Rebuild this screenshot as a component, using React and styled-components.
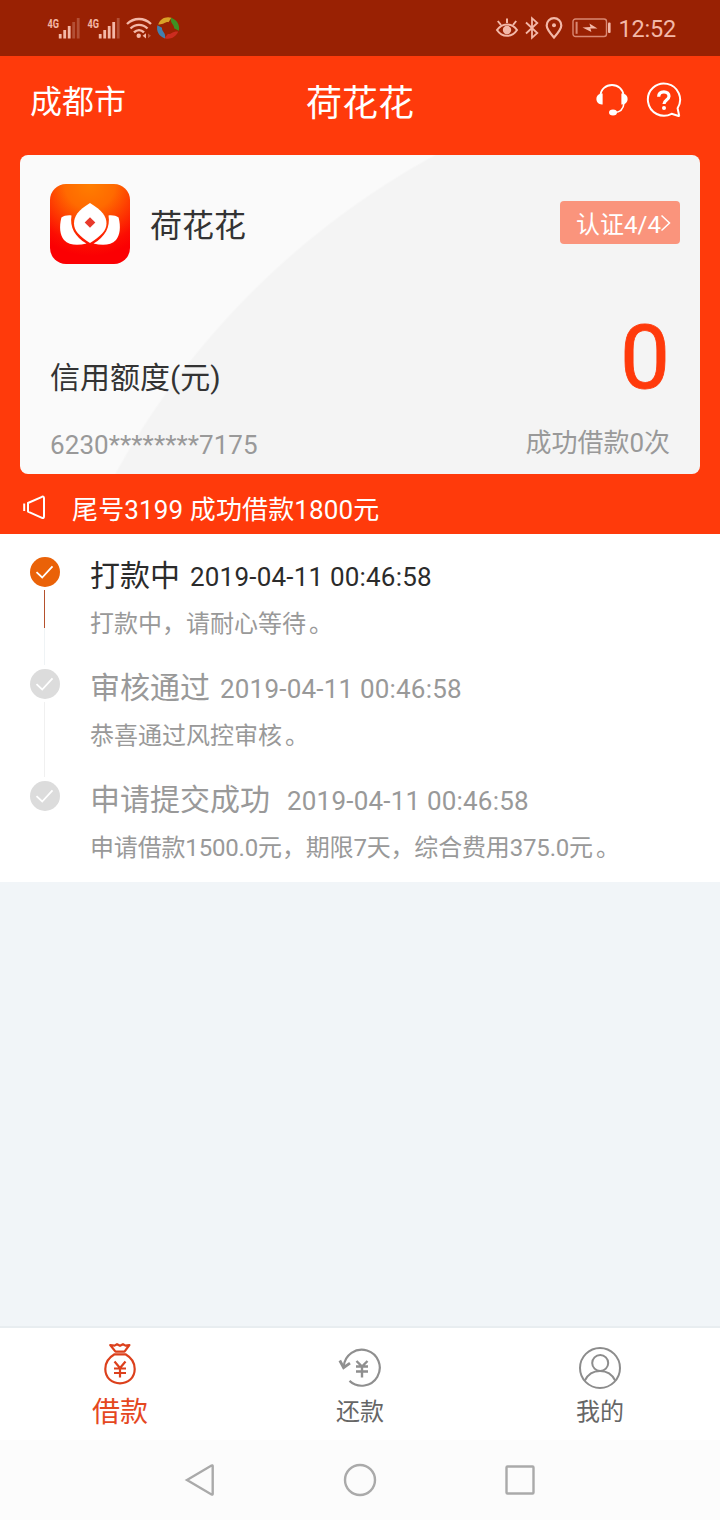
import React from 'react';
import styled, { createGlobalStyle } from 'styled-components';

const steps = [
  {
    title: '打款中',
    time: '2019-04-11 00:46:58',
    text: '打款中，请耐心等待',
    active: true,
    gap: 9,
  },
  {
    title: '审核通过',
    time: '2019-04-11 00:46:58',
    text: '恭喜通过风控审核',
    gap: 9,
  },
  {
    title: '申请提交成功',
    time: '2019-04-11 00:46:58',
    text: '申请借款1500.0元，期限7天，综合费用375.0元',
    gap: 16,
    spacing: -0.17,
  },
];

const SignalIcon = ({ bars }) => (
  <svg width="34" height="26" viewBox="0 0 34 26">
    <text x="0.5" y="12.5" fontSize="13" fontWeight="700" textLength="11.5" lengthAdjust="spacingAndGlyphs" fill="#f3b8a8" fontFamily="Roboto">
      4G
    </text>
    {[0, 1, 2, 3, 4].map((i) => (
      <rect
        key={i}
        x={11.8 + i * 4.5}
        y={[19, 15, 11, 7, 3][i]}
        width="2.8"
        height={[4.5, 8.5, 12.5, 16.5, 20.5][i]}
        fill="#f3b8a8"
        opacity={i < bars ? 1 : 0.3}
      />
    ))}
  </svg>
);

const WifiIcon = () => (
  <svg width="26" height="26" viewBox="0 0 26 26" fill="none" stroke="#f3b8a8" strokeWidth="2.4">
    <path d="M1 9 C8 2.4 18 2.4 25 9" />
    <path d="M4.5 13.5 C9.5 8.6 16.5 8.6 21.5 13.5" />
    <path d="M8 17.4 C11 14.4 15 14.4 18 17.4" />
    <circle cx="12.7" cy="20.8" r="2.2" fill="#f3b8a8" stroke="none" />
    <path d="M16.6 20.8 L20 18.2 V23.4Z" fill="#f3b8a8" stroke="none" />
    <path d="M22 18.4 L25 20.8 L22 23.2Z" fill="#f3b8a8" stroke="none" opacity="0.4" />
  </svg>
);

const PinwheelIcon = () => (
  <svg width="24" height="24" viewBox="0 0 24 24">
    <path d="M2.2 8.5 C4 3 9.5 0 15.5 1.8 L12.5 6.2 C9.5 5.4 7.5 9 2.2 8.5Z" fill="#d9a127" />
    <path d="M15 1.7 C21 3.6 24.2 9 22.8 14.8 L18 12.2 C18.6 8.6 13.6 7 15 1.7Z" fill="#3f8f22" />
    <path d="M22.2 15.6 C20 21.4 14 24 8.5 22.3 L11.8 18 C15.4 18.6 17 14.6 22.2 15.6Z" fill="#cc2c20" />
    <path d="M9 22.4 C3 20.4 0 15 1.4 9.2 L6 11.8 C5.4 15.4 10.4 17 9 22.4Z" fill="#4180b0" />
  </svg>
);

const EyeIcon = () => (
  <svg width="24" height="24" viewBox="0 0 24 24" fill="none" stroke="#f3b8a8" strokeWidth="2">
    <path d="M2 14 C7 6.5 17 6.5 22 14 C17 21.8 7 21.8 2 14Z" />
    <circle cx="12" cy="14" r="4.2" fill="#f3b8a8" stroke="none" />
    <path d="M12 7V2.5M6 9L2.8 5M18 9L21.2 5" />
  </svg>
);

const BluetoothIcon = () => (
  <svg width="14" height="24" viewBox="0 0 14 24" fill="none" stroke="#f3b8a8" strokeWidth="1.8">
    <path d="M1 6.5L12.3 17L7 21.8V2.2L12.3 7L1 17.5" />
  </svg>
);

const PinIcon = () => (
  <svg width="18" height="24" viewBox="0 0 18 24" fill="none" stroke="#f3b8a8" strokeWidth="2.2">
    <path d="M9 21.5 C5 17 1.7 13.3 1.7 9.5 A7.3 7.3 0 0 1 16.3 9.5 C16.3 13.3 13 17 9 21.5Z" />
    <circle cx="9" cy="9.3" r="2" fill="#f3b8a8" stroke="none" />
  </svg>
);

const BatteryIcon = () => (
  <svg width="40" height="20" viewBox="0 0 40 20">
    <rect x="1" y="1" width="33.5" height="17.5" rx="2.5" fill="none" stroke="#d98873" strokeWidth="1.4" />
    <rect x="3.6" y="3.8" width="2" height="12" fill="#d98873" />
    <path d="M10.5 9.4 L18.5 9 L17.4 5.6 L25.5 10.4 L18.4 10.6 L19.4 14Z" fill="#f3b8a8" />
    <rect x="36" y="4.5" width="2.6" height="10.5" rx="1" fill="#f3b8a8" />
  </svg>
);

const HeadsetIcon = () => (
  <svg width="32" height="34" viewBox="0 0 32 34" fill="none" stroke="#fff" strokeWidth="1.9">
    <path d="M4.3 13 C4.8 6 10 2 16 2 C22 2 27 6 27.7 13" />
    <path d="M6.6 10.6 V21.4 C2.7 21.8 0.4 19 0.4 16 C0.4 13 2.7 10.4 6.6 10.6Z" fill="#fff" stroke="none" />
    <path d="M25.4 10.6 V21.4 C29.3 21.8 31.6 19 31.6 16 C31.6 13 29.3 10.4 25.4 10.6Z" fill="#fff" stroke="none" />
    <path d="M28 20 C27.5 26 24 29.4 18 29.6" strokeWidth="1.6" />
    <ellipse cx="17" cy="29.5" rx="4" ry="3" fill="#fff" stroke="none" />
  </svg>
);

const HelpIcon = () => (
  <svg width="36" height="36" viewBox="0 0 36 36" fill="none" stroke="#fff" strokeWidth="2">
    <path d="M31.6 26.2 A16.1 16.1 0 1 0 25.6 31.8 L32.6 34 Q33.3 34.2 33.1 33.4Z" strokeLinejoin="round" />
    <path d="M12.7 14.8 C12.7 11.4 15 9.8 17.9 9.8 C20.9 9.8 23 11.6 23 14.2 C23 18 18 18 18 22" strokeWidth="3.2" />
    <circle cx="18" cy="26" r="2" fill="#fff" stroke="none" />
  </svg>
);

const LotusLogo = () => (
  <svg width="80" height="80" viewBox="0 0 80 80">
    <defs>
      <radialGradient id="lotusBg" cx="0.5" cy="0" r="0.9">
        <stop offset="0" stopColor="#ff7e00" />
        <stop offset="0.35" stopColor="#ff6a00" />
        <stop offset="0.85" stopColor="#fc0d02" />
        <stop offset="1" stopColor="#fb0003" />
      </radialGradient>
    </defs>
    <rect width="80" height="80" rx="16" fill="url(#lotusBg)" />
    <path d="M21.5 31.5 C17 31 14 32 11.4 33.5 C9 43 10 51 14 56 C19 61.5 28 61.5 36.5 59.5 C25 53 19.5 43 21.5 31.5Z" fill="#fff" />
    <path d="M58.5 31.5 C63 31 66 32 68.6 33.5 C71 43 70 51 66 56 C61 61.5 52 61.5 43.5 59.5 C55 53 60.5 43 58.5 31.5Z" fill="#fff" />
    <path d="M40 19 C28 26.5 24 32 24 39.5 C24 46.5 29 52 40 59 C51 52 56.5 46.5 56.5 39.5 C56.5 32 52 26.5 40 19Z" fill="#fff" />
    <path d="M40 33.2L45.3 38.5L40 43.8L34.7 38.5Z" fill="#e8392b" />
  </svg>
);

const HornIcon = () => (
  <svg width="24" height="26" viewBox="0 0 24 26" fill="none" stroke="#fff" strokeWidth="2" strokeLinejoin="round">
    <path d="M6 9 L20 2.8 Q22 2.1 22 4.2 V22.3 Q22 24.6 20 23.8 L6 17.6Z" />
    <path d="M2.2 9.5V17" />
  </svg>
);

const CheckIcon = () => (
  <svg width="30" height="30" viewBox="0 0 30 30" fill="none" stroke="#fff" strokeWidth="1.8">
    <path d="M6.5 15.2L12.2 20.5L22.5 9.3" />
  </svg>
);

const BagIcon = () => (
  <svg width="34" height="44" viewBox="0 0 34 44" fill="none" stroke="#dc401c" strokeWidth="2.2" strokeLinejoin="round">
    <path d="M12.5 9.6 L7.2 3 L11.5 3.6 L14 2.2 L17 3.8 L20 2.2 L22.5 3.6 L26.4 3 L21.5 9.6Z" />
    <path d="M11.5 12.3 H22.5 C28 15.5 31.7 21 31.7 27 C31.7 36 25 41.3 17 41.3 C9 41.3 2.3 36 2.3 27 C2.3 21 6 15.5 11.5 12.3Z" />
    <path d="M11.5 19.5 L17 26 L22.5 19.5 M17 26 V35.5 M11 26.5H23 M11 31H23" />
  </svg>
);

const RepayIcon = () => (
  <svg width="44" height="44" viewBox="0 0 44 44" fill="none" stroke="#8f8f8f" strokeWidth="2.2">
    <path d="M5.8 20.5 A18 18 0 1 1 11.5 34.9" />
    <path d="M1.8 14.5 L5.6 21.6 L12 17.2" strokeWidth="2.8" />
    <path d="M18.5 15 L24 20.5 L29.5 15 M24 20 V31.5 M18 20.5H30 M18 25.5H30" strokeWidth="2.4" />
  </svg>
);

const MineIcon = () => (
  <svg width="44" height="44" viewBox="0 0 44 44" fill="none" stroke="#8c8c8c" strokeWidth="2">
    <circle cx="22" cy="22" r="20" />
    <circle cx="22.2" cy="17" r="8" />
    <path d="M6.8 34.5 C13 21.7 31 21.7 37.2 34.5" />
  </svg>
);

const App = () => {
  return (
    <Page>
      <GlobalStyle />
      <StatusBar>
        <StatusGroup>
          <SignalIcon bars={3} />
          <SignalIcon bars={4} />
          <WifiIcon />
          <PinwheelIcon />
        </StatusGroup>
        <StatusGroup className="right">
          <EyeIcon />
          <BluetoothIcon />
          <PinIcon />
          <BatteryIcon />
          <Clock>12:52</Clock>
        </StatusGroup>
      </StatusBar>

      <Header>
        <City>成都市</City>
        <AppTitle>荷花花</AppTitle>
        <HeaderActions>
          <HeadsetIcon />
          <HelpIcon />
        </HeaderActions>
      </Header>

      <CardArea>
        <Card>
          <CardTop>
            <LotusLogo />
            <CardName>荷花花</CardName>
            <AuthButton>
              认证4/4
              <svg width="11" height="18" viewBox="0 0 11 18" fill="none" stroke="#fff" strokeWidth="1.5">
                <path d="M0.5 1.5L8.5 9L0.5 16.5" />
              </svg>
            </AuthButton>
          </CardTop>
          <CreditRow>
            <span>信用额度(元)</span>
            <Amount>0</Amount>
          </CreditRow>
          <CardBottom>
            <CardNumber>6230********7175</CardNumber>
            <LoanCount>成功借款0次</LoanCount>
          </CardBottom>
        </Card>
        <Notice>
          <HornIcon />
          <span>尾号3199 成功借款1800元</span>
        </Notice>
      </CardArea>

      <Steps>
        {steps.map((step) => (
          <Step key={step.title}>
            <Rail>
              <Dot $active={step.active}>
                <CheckIcon />
              </Dot>
              <Line $active={step.active} />
            </Rail>
            <StepBody>
              <StepTitle $active={step.active} $gap={step.gap}>
                {step.title}
                <span>{step.time}</span>
              </StepTitle>
              <StepText $spacing={step.spacing}>
                {step.text}
                <FullStop>。</FullStop>
              </StepText>
            </StepBody>
          </Step>
        ))}
      </Steps>

      <Filler />

      <TabBar>
        <Tab $active>
          <BagIcon />
          <span>借款</span>
        </Tab>
        <Tab>
          <RepayIcon />
          <span>还款</span>
        </Tab>
        <Tab>
          <MineIcon />
          <span>我的</span>
        </Tab>
      </TabBar>

      <NavBar>
        <svg width="36" height="36" viewBox="0 0 36 36">
          <path d="M5 18 L29.5 3.5 Q30.7 3 30.7 4 V32 Q30.7 33 29.5 32.5Z" />
        </svg>
        <svg width="36" height="36" viewBox="0 0 36 36">
          <circle cx="18" cy="18" r="15" />
        </svg>
        <svg width="36" height="36" viewBox="0 0 36 36">
          <rect x="4.5" y="4.5" width="27" height="27" rx="1" />
        </svg>
      </NavBar>
    </Page>
  );
};

const GlobalStyle = createGlobalStyle`
  * {
    box-sizing: border-box;
  }
  body {
    margin: 0;
    font-family: Roboto, 'Noto Sans CJK SC', sans-serif;
  }
  svg {
    display: block;
    flex-shrink: 0;
  }
`;

const Page = styled.div`
  display: flex;
  flex-direction: column;
  width: 720px;
  height: 1520px;
  overflow: hidden;
  white-space: nowrap;
  background-color: #f1f5f8;
`;

const StatusBar = styled.div`
  display: flex;
  justify-content: space-between;
  height: 56px;
  padding: 0 44px 0 47px;
  background-color: #992103;
`;

const StatusGroup = styled.div`
  display: flex;
  align-items: center;
  gap: 6px;

  svg:nth-child(3) {
    margin-left: -1px;
  }
  svg:nth-child(4) {
    margin-left: -2px;
  }
  &.right svg:nth-child(3) {
    margin-left: 0;
  }
  &.right svg:nth-child(4) {
    margin-left: 3px;
  }
`;

const Clock = styled.span`
  padding-top: 2px;
  font-size: 23.5px;
  line-height: 54px;
  letter-spacing: -0.2px;
  color: #f3b8a8;
`;

const Header = styled.div`
  display: grid;
  grid-template-columns: 1fr 1fr 1fr;
  align-items: center;
  height: 90px;
  padding: 0 38px 0 30px;
  color: white;
  background-color: #ff3a0b;
`;

const City = styled.span`
  padding-top: 2px;
  font-size: 32px;
  line-height: 40px;
`;

const AppTitle = styled.span`
  margin-left: 8px;
  padding-top: 5px;
  text-align: center;
  font-size: 36px;
  line-height: 44px;
`;

const HeaderActions = styled.div`
  display: flex;
  justify-content: flex-end;
  align-items: center;
  gap: 18px;
  padding-bottom: 2px;
`;

const CardArea = styled.div`
  height: 388px;
  padding: 9px 20px 0;
  background-color: #ff3a0b;
`;

const Card = styled.div`
  display: flex;
  flex-direction: column;
  height: 319px;
  padding: 29px 20px 0 30px;
  border-radius: 8px;
  background: radial-gradient(circle at 800px 706px, #f4f4f4 803px, #fafafa 805px);
`;

const CardTop = styled.div`
  display: flex;
  align-items: center;
  height: 80px;
`;

const CardName = styled.span`
  flex: 1;
  margin-left: 20px;
  padding-bottom: 2px;
  font-size: 32px;
  color: #333;
`;

const AuthButton = styled.button`
  display: flex;
  align-items: center;
  width: 120px;
  height: 43px;
  margin-top: -4px;
  padding: 1px 0 0 16px;
  border: none;
  border-radius: 4px;
  font-family: inherit;
  font-size: 24px;
  color: white;
  background-color: #fa947c;
`;

const CreditRow = styled.div`
  display: flex;
  justify-content: space-between;
  align-items: flex-end;
  height: 136px;
  padding-right: 10px;
  font-size: 30px;
  line-height: 44px;
  color: #333;
`;

const Amount = styled.span`
  margin-bottom: -3px;
  font-size: 89px;
  line-height: 90px;
  color: #ff3a0b;
  -webkit-text-stroke: 0.8px #ff3a0b;
`;

const CardBottom = styled.div`
  display: flex;
  justify-content: space-between;
  align-items: center;
  height: 70px;
  padding: 14px 10px 0 0;
  font-size: 26px;
  color: #999;
`;

const CardNumber = styled.span`
  margin-top: 6px;
  letter-spacing: 0.08px;
`;

const LoanCount = styled.span`
  margin-top: -3px;
`;

const Notice = styled.div`
  display: flex;
  align-items: center;
  gap: 26px;
  height: 60px;
  padding: 6px 0 0 2px;
  font-size: 26px;
  letter-spacing: 0.13px;
  color: white;
`;

const Steps = styled.div`
  height: 348px;
  padding: 23px 30px 0;
  background-color: white;
`;

const Step = styled.div`
  display: flex;
  height: 112px;

  &:last-child i {
    display: none;
  }
`;

const Rail = styled.div`
  display: flex;
  flex-direction: column;
  align-items: center;
  width: 30px;
`;

const Dot = styled.div`
  width: 30px;
  height: 30px;
  border-radius: 50%;
  background-color: ${({ $active }) => ($active ? '#ea6208' : '#dcdcdc')};
`;

const Line = styled.i`
  width: 1px;
  height: 75px;
  margin: 3px 1px 0 0;
  background: ${({ $active }) =>
    $active ? 'linear-gradient(#b5512d 38px, #eff3f5 38px)' : '#f0f0f0'};
`;

const StepBody = styled.div`
  margin: -1px 0 0 30px;
`;

const StepTitle = styled.div`
  font-size: 30px;
  line-height: 40px;
  color: ${({ $active }) => ($active ? '#2b2b2b' : '#999')};

  span {
    margin-left: ${({ $gap }) => $gap + 1}px;
    font-size: 26px;
    letter-spacing: 0.2px;
  }
`;

const StepText = styled.div`
  margin-top: 10px;
  font-size: 24px;
  line-height: 34px;
  letter-spacing: ${({ $spacing = 0 }) => $spacing}px;
  color: #999;
`;

const FullStop = styled.span`
  margin-left: 3px;
`;

const Filler = styled.div`
  flex: 1;
`;

const TabBar = styled.div`
  display: flex;
  height: 114px;
  border-top: 2px solid #e8edf0;
  background-color: white;
`;

const Tab = styled.div`
  flex: 1;
  display: flex;
  flex-direction: column;
  align-items: center;
  padding-top: ${({ $active }) => ($active ? 14 : 18)}px;

  span {
    margin-top: ${({ $active }) => ($active ? 7 : 2)}px;
    font-size: ${({ $active }) => ($active ? 28 : 24)}px;
    line-height: 40px;
    color: ${({ $active }) => ($active ? '#e5481f' : '#666')};
  }
`;

const NavBar = styled.div`
  display: flex;
  justify-content: center;
  align-items: center;
  gap: 124px;
  height: 80px;
  background-color: #fcfcfc;

  svg {
    fill: none;
    stroke: #aaa;
    stroke-width: 2.4;
  }
`;

export default App;
